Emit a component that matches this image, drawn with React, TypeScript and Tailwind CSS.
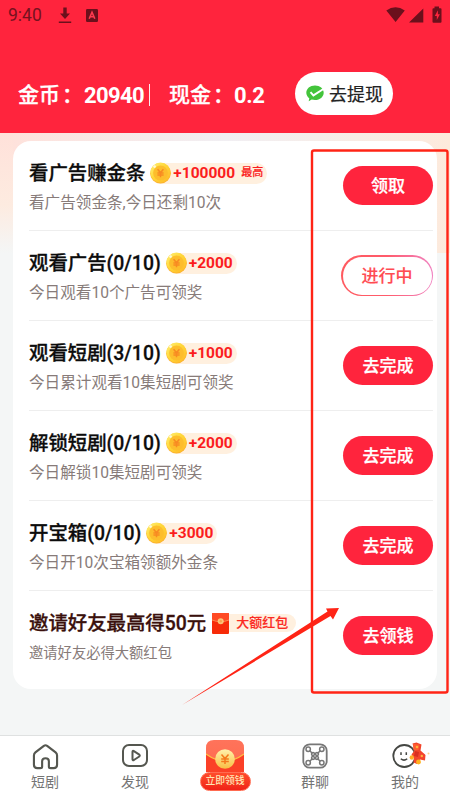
import React from "react";
import clsx from "clsx";

type Task = {
  title: string;
  desc: string;
  reward: string;
  note?: string;
  kind?: "coin" | "envelope";
  action: string;
  outlined?: boolean;
};

const TASKS: Task[] = [
  { title: "看广告赚金条", desc: "看广告领金条,今日还剩10次", reward: "+100000", note: "最高", action: "领取" },
  { title: "观看广告(0/10)", desc: "今日观看10个广告可领奖", reward: "+2000", action: "进行中", outlined: true },
  { title: "观看短剧(3/10)", desc: "今日累计观看10集短剧可领奖", reward: "+1000", action: "去完成" },
  { title: "解锁短剧(0/10)", desc: "今日解锁10集短剧可领奖", reward: "+2000", action: "去完成" },
  { title: "开宝箱(0/10)", desc: "今日开10次宝箱领额外金条", reward: "+3000", action: "去完成" },
  { title: "邀请好友最高得50元", desc: "邀请好友必得大额红包", reward: "大额红包", kind: "envelope", action: "去领钱" },
];

function Coin() {
  return (
    <svg width="21" height="22" viewBox="0 0 21 22" className="mt-[-1px] shrink-0">
      <defs>
        <linearGradient id="coin" x1="0" y1="0" x2="1" y2="1">
          <stop offset="0" stopColor="#fff27a" />
          <stop offset="0.45" stopColor="#ffd738" />
          <stop offset="1" stopColor="#ffb526" />
        </linearGradient>
      </defs>
      <circle cx="10.5" cy="11.3" r="10.3" fill="#fbb02c" />
      <circle cx="10.5" cy="10.6" r="10.2" fill="url(#coin)" />
      <circle cx="10.5" cy="11" r="7.4" fill="#fdbd2c" />
      <path d="M7.6 7.2l2.9 3.6 2.9-3.6M7.4 10.9h6.2M7.4 13h6.2M10.5 10.8v4.4" stroke="#f88a22" strokeWidth="1.5" fill="none" />
      <circle cx="4.6" cy="4.6" r="1.4" fill="#fff" opacity="0.75" />
    </svg>
  );
}

function Envelope() {
  return (
    <svg width="17" height="21" viewBox="0 0 17 21" className="shrink-0">
      <rect width="17" height="21" rx="1" fill="#f72b08" />
      <path d="M0 1a1 1 0 0 1 1-1h15a1 1 0 0 1 1 1v6Q8.500 10.500 0 7z" fill="#ff4a24" />
      <path d="M0 7Q8.500 10.500 17 7" stroke="#ff9b5c" strokeWidth="0.8" fill="none" />
      <circle cx="8.700" cy="8.200" r="3" fill="#fbc478" />
      <circle cx="8.700" cy="8.200" r="1.300" fill="#f6a552" />
    </svg>
  );
}

function StatusBar() {
  return (
    <div className="flex h-8 items-center pl-2 pr-[8px] text-[#76121f]">
      <span className="w-[50px] text-[17.500px] leading-none">9:40</span>
      <svg width="14" height="17" viewBox="0 0 14 17" className="mt-[-2px]" fill="#6b101c">
        <path d="M5.300 0.500h3.400v6h3.300L7 12 2 6.500h3.300zM0.800 14.600h12.400v1.500H0.800z" />
      </svg>
      <svg width="12" height="13" viewBox="0 0 12 13" className="ml-[14px] mt-[-2px]">
        <rect width="12" height="13" rx="1.200" fill="#6b101c" />
        <path d="M3.200 9.800L6 3.200l2.800 6.600M4.200 7.700h3.600" stroke="#ff3a50" strokeWidth="1.600" fill="none" />
      </svg>
      <svg width="56" height="18" viewBox="0 0 56 18" className="ml-auto mt-[-2px]" fill="#6b101c">
        <path d="M0.300 4.600Q9.500-2.100 18.800 4.600L9.600 16zM37.300 2.600V16.400H23z" />
        <path d="M48.500 0.500h4.500v1.700h1.500a1 1 0 0 1 1 1v12.500a1 1 0 0 1-1 1h-7a1 1 0 0 1-1-1V3.200a1 1 0 0 1 1-1h1z" />
        <path d="M51.900 4.200l-3.100 5.700h2v4l3.100-5.600h-2z" fill="#ff243d" />
      </svg>
    </div>
  );
}

function Header() {
  return (
    <header className="h-[133px] bg-[#ff243d] text-white">
      <StatusBar />
      <div className="mt-[39px] flex h-[44px] items-center pl-[18px] text-[21px] font-bold">
        <span className="flex w-[66px] whitespace-nowrap pt-[5px] font-medium [-webkit-text-stroke:0.3px]">
          金币<span className="ml-[2px]">：</span>
        </span>
        <span className="w-[65px] pt-[5px] text-[22px] tracking-[-0.600px]">20940</span>
        <span className="mt-[4px] h-[22px] w-px bg-white/90" />
        <span className="ml-[19px] flex w-[65px] whitespace-nowrap pt-[5px] font-medium [-webkit-text-stroke:0.3px]">
          现金<span className="ml-[2px]">：</span>
        </span>
        <span className="w-[61px] pt-[5px] text-[22px] tracking-[-0.400px]">0.2</span>
        <button className="flex h-[43px] w-[98px] items-center rounded-full bg-white pl-[11px] text-[18px] font-normal text-[#222]">
          <svg width="18" height="17" viewBox="0 0 18 17" className="mr-[5px] shrink-0">
            <path d="M9 0.500c5 0 8.700 3.200 8.700 7.300S14 15.100 9 15.100c-1.200 0-2.300-.2-3.300-.5l-3 1.600.6-2.900C1.500 12 .3 10 .3 7.800.3 3.700 4 .5 9 .5z" fill="#43c43b" />
            <path d="M4.500 7.200l2.900 3.200L17 4.200" stroke="#fff" strokeWidth="1.900" fill="none" />
          </svg>
          <span className="pt-[3px] [-webkit-text-stroke:0.2px]">去提现</span>
        </button>
      </div>
    </header>
  );
}

function RewardBadge({ task }: { task: Task }) {
  if (task.kind === "envelope") {
    return (
      <div className="ml-[6px] flex h-[21px] items-center">
        <Envelope />
        <span className="flex h-[18px] w-[67px] items-center whitespace-nowrap rounded-r-full bg-[#fff0df] pl-[7px] text-[13px] font-medium text-[#fb2b23] [-webkit-text-stroke:0.15px]">
          {task.reward}
        </span>
      </div>
    );
  }
  return (
    <div className="ml-[5px] flex h-[21px] items-center rounded-full bg-[#fff0df] pr-[4px] text-[#fb1d1d]">
      <Coin />
      <span className="ml-[2px] pt-[2px] text-[15.500px] font-bold">{task.reward}</span>
      {task.note && (
        <span className="ml-[6px] text-[11px] font-medium [-webkit-text-stroke:0.15px]">{task.note}</span>
      )}
    </div>
  );
}

function ActionButton({ task }: { task: Task }) {
  if (task.outlined) {
    return (
      <button className="h-[41px] w-[92px] rounded-full bg-linear-to-r from-[#ff5a5f] via-[#ff5b6b] to-[#f07fc0] p-[1.500px]">
        <span className="flex h-full w-full items-center justify-center rounded-full bg-white pt-[2px] text-[17px] font-medium text-[#ff4b52] [-webkit-text-stroke:0.15px]">
          {task.action}
        </span>
      </button>
    );
  }
  return (
    <button className="h-[39px] w-[90px] rounded-full bg-[#ff243d] pt-[2px] text-[17px] font-medium text-white [-webkit-text-stroke:0.25px]">
      {task.action}
    </button>
  );
}

function TaskRow({ task, last }: { task: Task; last: boolean }) {
  const invite = task.kind === "envelope";
  return (
    <div className={clsx("flex h-[90px] justify-between", !last && "border-b border-[#eeeeee]")}>
      <div className="whitespace-nowrap pt-5">
        <div className="flex h-6 items-center">
          <h2
            className={clsx(
              "pt-[2px] text-[19.400px] font-medium [-webkit-text-stroke:0.3px]",
              invite ? "text-[#3a100c]" : "text-[#0c0c0c]",
            )}
          >
            {task.title}
          </h2>
          <RewardBadge task={task} />
        </div>
        <p className={clsx("mt-[7px] leading-[22px] text-[#877b79]", invite ? "text-[14.300px]" : "text-[15.600px]")}>
          {task.desc}
        </p>
      </div>
      <div className="flex h-[89px] items-center">
        <ActionButton task={task} />
      </div>
    </div>
  );
}

function NavItem({ label, children }: { label: string; children: React.ReactNode }) {
  return (
    <div className="flex flex-col items-center pt-[6px] text-[14px] leading-5 text-[#747474]">
      <div className="flex h-[28px] items-center">{children}</div>
      <span className="mt-[2px]">{label}</span>
    </div>
  );
}

function BottomNav() {
  return (
    <nav className="grid h-[65px] grid-cols-5 border-t border-[#dfe1e1] bg-white">
      <NavItem label="短剧">
        <svg width="27" height="27" viewBox="0 0 28 28" fill="none" stroke="#555750" strokeWidth="2.200" strokeLinejoin="round">
          <path d="M12.300 2.900L3.500 9.800Q2 11 2 13v9.500Q2 26 5.500 26h3Q10.500 26 10.500 24.500V19q0-3.200 3.500-3.200t3.500 3.200v5.500q0 1.500 2 1.500h3Q26 26 26 22.500V13q0-2-1.500-3.200l-8.800-6.900Q14 1.700 12.300 2.900z" />
        </svg>
      </NavItem>
      <NavItem label="发现">
        <svg width="28" height="28" viewBox="0 0 28 28" fill="none" stroke="#555750" strokeWidth="2" strokeLinejoin="round">
          <rect x="2" y="3" width="24" height="21" rx="6" />
          <path d="M11.500 9.800v7.400q0 1.500 1.400.8l5.400-3.500q1-.9 0-1.800l-5.400-3.600q-1.400-.8-1.400.7z" />
        </svg>
      </NavItem>
      <div className="flex flex-col items-center pt-[4px]">
        <svg width="38" height="32" viewBox="0 0 38 32">
          <defs>
            <linearGradient id="packet" x1="0" y1="0" x2="0" y2="1">
              <stop offset="0" stopColor="#ff735b" />
              <stop offset="1" stopColor="#ff6a4c" />
            </linearGradient>
            <linearGradient id="medal" x1="0" y1="0" x2="0" y2="1">
              <stop offset="0" stopColor="#fff2ac" />
              <stop offset="1" stopColor="#f9bd43" />
            </linearGradient>
          </defs>
          <path d="M0 32V8Q0 0 8 0h22q8 0 8 8v24z" fill="url(#packet)" />
          <path d="M0 14Q19 28 38 14v18H0z" fill="#fb4027" />
          <path d="M0 14Q19 28 38 14" stroke="#ffc043" strokeWidth="1.200" fill="none" />
          <circle cx="19" cy="19" r="9.800" fill="url(#medal)" />
          <path d="M15.500 14.500l3.500 4 3.500-4M15.200 19h7.600M15.200 21.500h7.600M19 18.500v5.500" stroke="#f4791c" strokeWidth="1.500" fill="none" />
        </svg>
        <span className="flex h-[19px] w-[51px] items-center justify-center whitespace-nowrap rounded-full border border-[#ff6b51] bg-linear-to-b from-[#ff4b2b] to-[#f02217] text-[9.800px] font-medium text-[#ffe6b5]">
          立即领钱
        </span>
      </div>
      <NavItem label="群聊">
        <svg width="26" height="26" viewBox="0 0 26 26" fill="none" stroke="#777777" strokeWidth="1.500">
          <rect x="1.300" y="1.300" width="23.400" height="23.400" rx="6.500" strokeWidth="1.800" />
          <path d="M7.800 7.800l2.700 2.700M18.200 7.800l-2.700 2.700M7.800 18.200l2.700-2.700M18.200 18.200l-2.700-2.700" />
          <circle cx="6.200" cy="6.200" r="2.200" />
          <circle cx="19.800" cy="6.200" r="2.200" />
          <circle cx="6.200" cy="19.800" r="2.200" />
          <circle cx="19.800" cy="19.800" r="2.200" />
          <circle cx="11" cy="11" r="1.500" />
          <circle cx="15" cy="11" r="1.500" />
          <circle cx="11" cy="15" r="1.500" />
          <circle cx="15" cy="15" r="1.500" />
        </svg>
      </NavItem>
      <NavItem label="我的">
        <div className="relative">
          <svg width="26" height="26" viewBox="0 0 26 26" fill="none" stroke="#454743" strokeWidth="1.800">
            <circle cx="12.300" cy="13" r="11" />
            <path d="M9 9.200v2.800M14.300 9.200v2.800" strokeWidth="1.500" />
            <path d="M8.800 15.800q3.200 2.700 6.400 0" strokeWidth="1.500" />
          </svg>
          <svg width="24" height="24" viewBox="0 0 24 24" className="absolute left-[15px] top-[-1px]">
            <path d="M5.500 1.500l4-1 5 2-1 6 5 4.500-.5 5.500-5-1-3 4.500-3.500-1.500.5-4-2.500-4 3-4z" fill="#f2452a" />
            <path d="M6 2l6.500.5-1 5.500-5 .5z" fill="#ff5d30" />
            <path d="M8 9l4 1-1 5-4-1z" fill="#d92f20" />
            <path d="M12 10.500l5.500 1.500v5l-5-1z" fill="#f4442e" />
            <circle cx="10" cy="5" r="1.300" fill="#ffb33e" />
            <circle cx="4.800" cy="15.500" r="2.200" fill="#ffad26" />
            <circle cx="14.800" cy="14" r="1.200" fill="#ffb33e" />
            <circle cx="11.500" cy="20" r="2.400" fill="#ffb21e" />
            <circle cx="21.500" cy="11.500" r="1" fill="#ffd38b" />
          </svg>
        </div>
      </NavItem>
    </nav>
  );
}

// Frame and arrow that point at the button column
function Callout() {
  return (
    <svg width="450" height="800" viewBox="0 0 450 800" className="pointer-events-none absolute left-0 top-0">
      <rect x="312" y="150.500" width="135.500" height="542" rx="2" fill="none" stroke="#ff2416" strokeWidth="2.400" />
      <path d="M182 705L327.500 611.500 326 608.500 339 608 333 619.500 330.500 616z" fill="#ff2416" />
    </svg>
  );
}

export default function App() {
  return (
    <div className="relative flex h-[800px] w-[450px] flex-col overflow-hidden bg-[#f4f6f6] font-['Roboto','Noto_Sans_CJK_SC',sans-serif]">
      <Header />
      <main className="flex-1 bg-[image:linear-gradient(to_bottom,#ffe1da,#fdebe0_60%,#f4f6f6),linear-gradient(to_right,#ffe1da,#f1eff3_50%,#fdeadc)] bg-[length:13px_120px,450px_120px] bg-no-repeat pl-[13px] pt-2">
        <div className="h-[548px] w-[424px] rounded-[18px] bg-white pl-4 pr-1">
          {TASKS.map((task, idx) => (
            <TaskRow key={task.title} task={task} last={idx === TASKS.length - 1} />
          ))}
        </div>
      </main>
      <BottomNav />
      <Callout />
    </div>
  );
}
